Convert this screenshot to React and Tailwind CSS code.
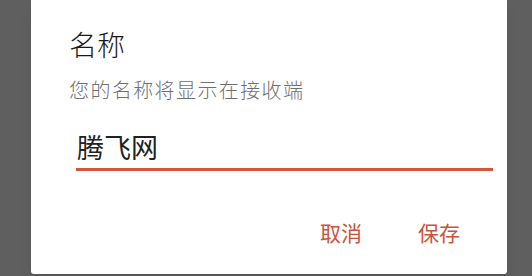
export default function App() {
  return (
    <div
      className="flex h-[276px] w-[532px] items-end bg-[#5f5f5f] pb-[2px] pl-[31px]"
      style={{ fontFamily: '"Noto Sans CJK SC", "Noto Sans", sans-serif' }}
    >
      <div className="flex h-[274px] w-[476px] flex-col rounded-b-[3px] bg-white shadow-lg">
        {/* Header */}
        <div className="px-[38px] pt-[24px]">
          <h2 className="text-[28px] leading-[40px] font-light text-[#1a1a1a]">名称</h2>
          <p className="mt-[13px] text-[20px] leading-[26px] tracking-[1.4px] font-light text-[#6f6f6f]">
            您的名称将显示在接收端
          </p>
        </div>

        {/* Input */}
        <div className="mt-[26px] pl-[45px] pr-[14px]">
          <div className="border-b-[3px] border-[#d4553a] pb-[3px] pl-[1px] text-[27px] leading-[36px] text-[#212121]">
            腾飞网
          </div>
        </div>

        {/* Actions */}
        <div className="mt-auto flex justify-end gap-[56px] pb-[29px] pr-[47px]">
          <button className="text-[21px] leading-[26px] text-[#c9533b]">取消</button>
          <button className="text-[21px] leading-[26px] text-[#c9533b]">保存</button>
        </div>
      </div>
    </div>
  );
}
